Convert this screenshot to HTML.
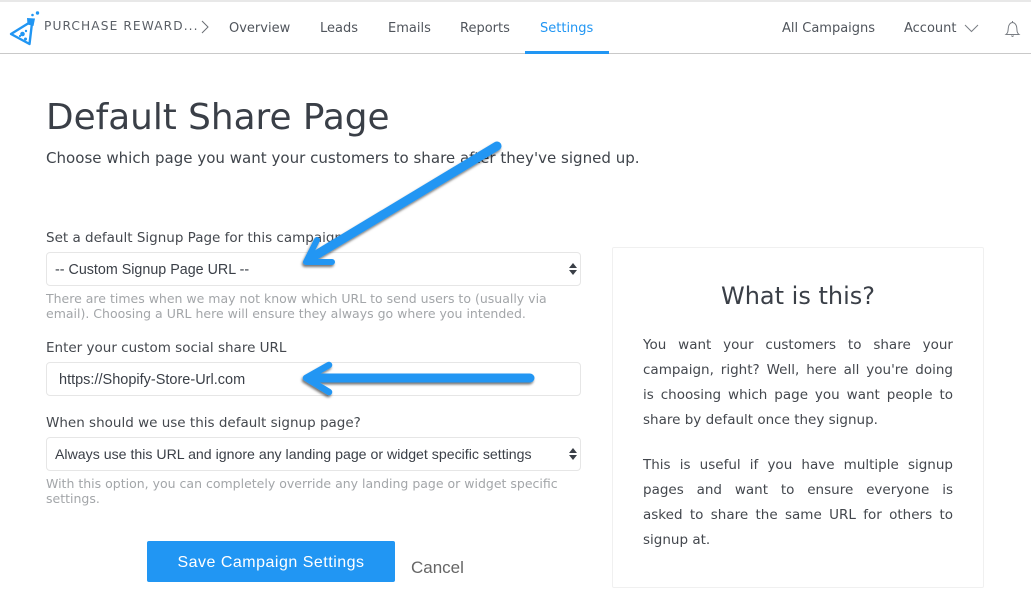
<!DOCTYPE html>
<html lang="en">
<head>
<meta charset="utf-8">
<title>Default Share Page</title>
<style>
html,body{margin:0;padding:0;background:#fff;}
body{width:1031px;height:616px;overflow:hidden;position:relative;font-family:"DejaVu Sans",sans-serif;color:#3a3f47;}
.t{position:absolute;white-space:nowrap;line-height:20px;}
.nav{font-size:13px;color:#50555c;top:19px;}
.box{position:absolute;left:46px;width:533px;background:#fff;border:1px solid #e6e6e6;border-radius:4px;}
.sans{font-family:"Liberation Sans",sans-serif;}
.help{font-size:12.5px;color:#a3a6a9;line-height:15px;}
.p{position:absolute;left:643px;width:310px;font-size:13.5px;color:#43474d;line-height:20px;white-space:nowrap;text-align:justify;text-align-last:justify;}
.last{text-align-last:left;}
</style>
</head>
<body>
<div style="position:absolute;left:0;top:0;width:1031px;height:2px;background:#e8e8e8"></div>
<div style="position:absolute;left:0;top:53px;width:1031px;height:1px;background:#c9c9c9"></div>

<svg style="position:absolute;left:0;top:0" width="60" height="54" viewBox="0 0 60 54">
  <path d="M28 23.5 L11 34 L29.5 44 L32 23" fill="none" stroke="#2196f3" stroke-width="2.4" stroke-linejoin="round"/>
  <path d="M27 18 L35 18.5 L33.5 26 L27.5 24.5 Z" fill="#2196f3"/>
  <circle cx="22.5" cy="34" r="2.3" fill="#2196f3"/><circle cx="26" cy="31" r="1.2" fill="#2196f3"/><circle cx="25.5" cy="39" r="1.5" fill="#2196f3"/><circle cx="20" cy="36" r="1.1" fill="#2196f3"/>
  <circle cx="32.5" cy="15" r="1.3" fill="#2196f3"/><circle cx="37.5" cy="13" r="1.7" fill="#2196f3"/>
</svg>

<div class="t" style="left:44px;top:16px;font-size:12.2px;letter-spacing:1.1px;color:#5a5f66">PURCHASE REWARD...</div>
<svg style="position:absolute;left:200px;top:20px" width="10" height="15"><path d="M2 1 L8 7 L2 13" fill="none" stroke="#6a6e74" stroke-width="1"/></svg>

<div class="t nav" style="left:229px">Overview</div>
<div class="t nav" style="left:320px">Leads</div>
<div class="t nav" style="left:388px">Emails</div>
<div class="t nav" style="left:460px">Reports</div>
<div class="t nav" style="left:540px;color:#2196f3">Settings</div>
<div style="position:absolute;left:525px;top:51px;width:84px;height:3px;background:#2196f3"></div>
<div class="t nav" style="left:782px">All Campaigns</div>
<div class="t nav" style="left:904px">Account</div>
<svg style="position:absolute;left:964px;top:24px" width="15" height="9"><path d="M1 1 L7.5 7.5 L14 1" fill="none" stroke="#7a7e84" stroke-width="1"/></svg>
<svg style="position:absolute;left:1004px;top:20px" width="18" height="18"><path d="M2 14.5 C4 13 4 11 4.3 8 C4.6 4.5 6.5 2.5 8.5 2.5 C10.5 2.5 12.5 4.5 12.8 8 C13 11 13 13 15 14.5 Z" fill="none" stroke="#7a7e84" stroke-width="1"/><path d="M7.5 15.5 Q8.5 17.5 9.5 15.5" fill="none" stroke="#7a7e84"/><path d="M8.5 1 V2.5" stroke="#7a7e84"/></svg>

<div class="t" style="left:46px;top:98px;font-size:35.8px;line-height:40px;color:#3a3f47">Default Share Page</div>
<div class="t" style="left:46px;top:148px;font-size:15.05px;color:#3f444b">Choose which page you want your customers to share after they've signed up.</div>

<div class="t" style="left:46px;top:228px;font-size:13.5px;color:#44484e">Set a default Signup Page for this campaign</div>
<div class="box" style="top:252px;height:32px"></div>
<div class="t sans" style="left:55px;top:260px;font-size:14.3px;color:#3a3f47">-- Custom Signup Page URL --</div>
<svg style="position:absolute;left:568px;top:262px" width="10" height="14"><path d="M5 1 L9 6 H1 Z M1 8 H9 L5 13 Z" fill="#3a3f47"/></svg>
<div class="t help" style="left:46px;top:291px">There are times when we may not know which URL to send users to (usually via</div>
<div class="t help" style="left:46px;top:306px">email). Choosing a URL here will ensure they always go where you intended.</div>

<div class="t" style="left:46px;top:338px;font-size:13.5px;color:#44484e">Enter your custom social share URL</div>
<div class="box" style="top:362px;height:32px"></div>
<div class="t sans" style="left:59px;top:370px;font-size:14.5px;color:#3a3f47">https://Shopify-Store-Url.com</div>

<div class="t" style="left:46px;top:413px;font-size:13.5px;color:#44484e">When should we use this default signup page?</div>
<div class="box" style="top:437px;height:32px"></div>
<div class="t sans" style="left:55px;top:444px;font-size:14.15px;color:#3a3f47">Always use this URL and ignore any landing page or widget specific settings</div>
<svg style="position:absolute;left:568px;top:447px" width="10" height="14"><path d="M5 1 L9 6 H1 Z M1 8 H9 L5 13 Z" fill="#3a3f47"/></svg>
<div class="t help" style="left:46px;top:476px">With this option, you can completely override any landing page or widget specific</div>
<div class="t help" style="left:46px;top:491px">settings.</div>

<div style="position:absolute;left:147px;top:541px;width:248px;height:41px;background:#2196f3;border-radius:2px;color:#fff;font-family:'Liberation Sans',sans-serif;font-size:16px;letter-spacing:.5px;line-height:43px;text-align:center">Save Campaign Settings</div>
<div class="t sans" style="left:411px;top:558px;font-size:17px;color:#666">Cancel</div>

<div style="position:absolute;left:612px;top:247px;width:370px;height:339px;border:1px solid #f0f0f0;border-radius:2px"></div>
<div class="t" style="left:612px;width:372px;top:281px;font-size:24px;line-height:30px;text-align:center;color:#3a3f47">What is this?</div>
<div class="p" style="top:335px">You want your customers to share your</div>
<div class="p" style="top:360px">campaign, right? Well, here all you're doing</div>
<div class="p" style="top:385px">is choosing which page you want people to</div>
<div class="p last" style="top:410px">share by default once they signup.</div>
<div class="p" style="top:455px">This is useful if you have multiple signup</div>
<div class="p" style="top:480px">pages and want to ensure everyone is</div>
<div class="p" style="top:505px">asked to share the same URL for others to</div>
<div class="p last" style="top:530px">signup at.</div>

<svg style="position:absolute;left:0;top:0" width="1031" height="616" viewBox="0 0 1031 616">
  <defs><filter id="s" x="-10%" y="-10%" width="120%" height="130%"><feDropShadow dx="-1" dy="2" stdDeviation="1.2" flood-color="#000" flood-opacity=".55"/></filter></defs>
  <g fill="none" stroke="#2196f3" stroke-linecap="round" stroke-linejoin="round" filter="url(#s)">
    <path d="M497 146 L311 258" stroke-width="9"/>
    <path d="M317 240 L306 262 L332 262" stroke-width="6"/>
    <path d="M530 378 L312 378" stroke-width="9"/>
    <path d="M329 365 L306 378 L329 392" stroke-width="6.5"/>
  </g>
</svg>
</body>
</html>
